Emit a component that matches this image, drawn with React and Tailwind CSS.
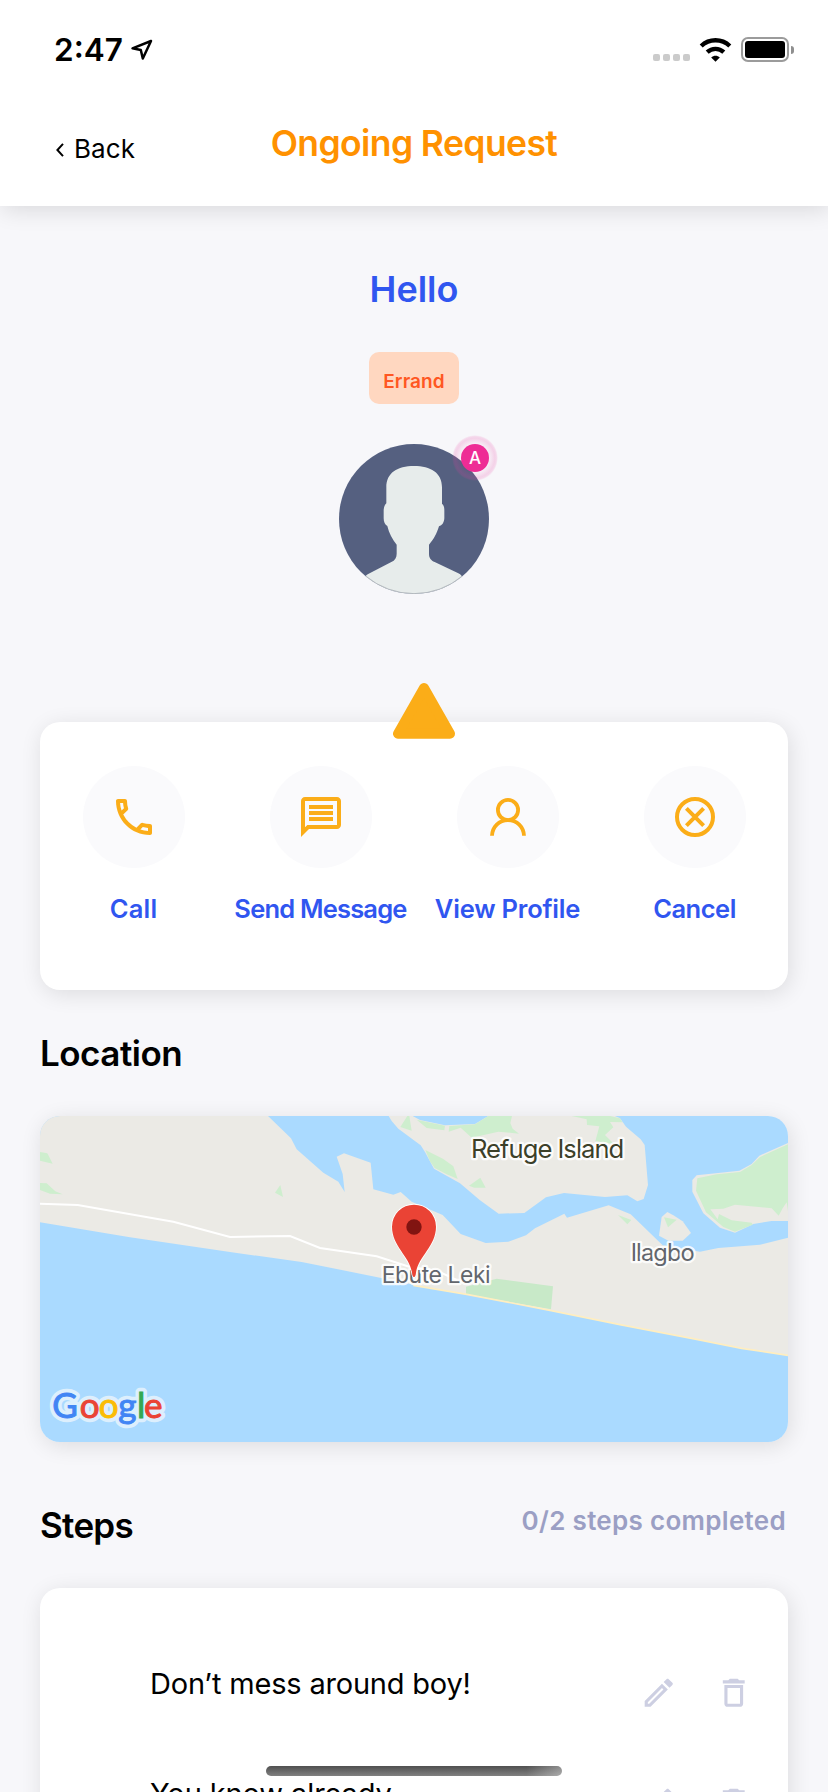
import {
  MdOutlineDelete,
  MdOutlineEdit,
  MdOutlineLocalPhone,
  MdOutlineMessage,
} from "react-icons/md";

const CARD =
  "rounded-[20px] shadow-[2px_4px_22px_rgba(0,0,0,0.11)]";

const GOOGLE = [
  { char: "G", x: 67, fill: "#4285f4" },
  { char: "o", x: 149, fill: "#ea4335" },
  { char: "o", x: 206, fill: "#fbbc05" },
  { char: "g", x: 265, fill: "#4285f4" },
  { char: "l", x: 321, fill: "#34a853" },
  { char: "e", x: 342, fill: "#ea4335" },
];

function StatusBar() {
  return (
    <div className="flex h-[99px] items-center justify-between pr-[34px] pl-[54px]">
      <div className="flex items-center gap-[7px]">
        <span className="text-[31.5px] leading-10 font-semibold">2:47</span>
        <svg className="h-[22px] w-[23px]" viewBox="0 0 23 22" fill="none">
          <path
            d="M21 2 L2.5 9.3 L10.8 11 L12.8 19.5 Z"
            stroke="#000"
            strokeWidth="2.5"
            strokeLinejoin="round"
          />
        </svg>
      </div>
      <div className="flex items-center">
        <div className="mt-4 flex gap-[3px]">
          <span className="size-[7px] rounded-[2px] bg-[#cbcbcb]" />
          <span className="size-[7px] rounded-[2px] bg-[#cbcbcb]" />
          <span className="size-[7px] rounded-[2px] bg-[#cbcbcb]" />
          <span className="size-[7px] rounded-[2px] bg-[#cbcbcb]" />
        </div>
        <svg className="ml-[9px] h-6 w-[33px]" viewBox="0 0 33 24" fill="none">
          <path d="M2.2 8 C10.3 0.4 22.7 0.4 30.8 8" stroke="#000" strokeWidth="4.4" />
          <path d="M8.2 14.2 C13 9.8 20 9.8 24.8 14.2" stroke="#000" strokeWidth="4.4" />
          <path d="M16.5 23.8 L12.2 19.6 C14.7 17.2 18.3 17.2 20.8 19.6 Z" fill="#000" />
        </svg>
        <div className="ml-[9px] flex h-[25px] w-12 rounded-[7px] border-2 border-[#9b9b9b] p-[2px]">
          <div className="flex-1 rounded-[3px] bg-black" />
        </div>
        <div className="ml-[2px] h-2 w-[3px] rounded-r-full bg-[#8f8f8f]" />
      </div>
    </div>
  );
}

function Header() {
  return (
    <header className="relative z-10 h-[206px] shrink-0 bg-white shadow-[2px_4px_22px_rgba(0,0,0,0.12)]">
      <StatusBar />
      <div className="grid grid-cols-[1fr_auto_1fr] items-start">
        <button className="mt-[29px] flex h-10 items-center pl-14">
          <svg className="mt-1 h-[14px] w-2" viewBox="0 0 8 14" fill="none">
            <path d="M7 0.8 L1.4 7 L7 13.2" stroke="#000" strokeWidth="2" />
          </svg>
          <span className="ml-[10px] text-[26px] tracking-[0.1px]">Back</span>
        </button>
        <h1 className="mt-[25px] text-[35.5px] leading-10 font-[560] tracking-[-0.6px] text-[#ff9100]">
          Ongoing Request
        </h1>
      </div>
    </header>
  );
}

function Avatar() {
  return (
    <div className="relative mt-10 size-[150px]">
      <svg className="size-full" viewBox="117 582 450 450">
        <defs>
          <clipPath id="avatar">
            <circle cx="342" cy="807" r="225" />
          </clipPath>
        </defs>
        <g clipPath="url(#avatar)">
          <rect x="117" y="582" width="450" height="450" fill="#556080" />
          <path
            d="M259 760 V712 C259 668 292 648 342 648 C392 648 426 668 426 712 V761 C432 766 433 772 433 782 V805 C432 819 426 826 417 829 C410 852 401 868 387 884 V911 C387 924 393 931 404 936 L475 970 Q487 976 487 984 V1040 H197 V978 Q200 974 206 971 L274 936 C285 931 290 923 290 911 V884 C277 868 267 850 262 828 C255 824 251 816 251 805 V780 C252 770 254 765 259 760 Z"
            fill="#e7eceb"
          />
          <path d="M197 978 A225 225 0 0 0 487 978" fill="none" stroke="#9aa0a6" strokeWidth="2" />
        </g>
      </svg>
      <span className="absolute top-[-9px] left-[113px] flex size-[46px] items-center justify-center rounded-full bg-[radial-gradient(closest-side,rgba(232,60,160,0.03)_60%,rgba(232,60,160,0.2)_86%,rgba(232,60,160,0.16)_93%,rgba(232,60,160,0)_100%)]">
        <span className="flex size-7 items-center justify-center rounded-full bg-[#ee2c95] pt-px text-[17px] font-medium text-white">
          A
        </span>
      </span>
    </div>
  );
}

function ProfileIcon() {
  return (
    <svg className="size-12" viewBox="0 0 48 48" fill="none" stroke="#fbad18" strokeWidth="3.8">
      <circle cx="24" cy="17" r="10.1" />
      <path d="M8 42.8 C8.3 34 15 27.2 24 27.2 C33 27.2 39.7 34 40 42.8" strokeLinejoin="round" />
    </svg>
  );
}

function CancelIcon() {
  return (
    <svg className="size-12" viewBox="0 0 48 48" fill="none" stroke="#fbad18">
      <circle cx="24" cy="24" r="18" strokeWidth="4" />
      <path d="M15.4 15.4 L32.6 32.6 M32.6 15.4 L15.4 32.6" strokeWidth="4" />
    </svg>
  );
}

function Action({ icon, children, className }) {
  return (
    <button className="flex flex-col items-center">
      <span className="flex size-[102px] items-center justify-center rounded-full bg-[#fafafc] text-[48px] text-[#fbad18]">
        {icon}
      </span>
      <span
        className={`mt-[25px] text-[25.5px] leading-8 font-[570] whitespace-nowrap text-[#3056f0] ${className}`}
      >
        {children}
      </span>
    </button>
  );
}

function Actions() {
  return (
    <section className={`relative mt-32 h-[268px] bg-white pt-11 ${CARD}`}>
      <svg className="absolute top-[-40px] left-[352px] h-[58px] w-16" viewBox="0 0 64 58">
        <path
          d="M32 6 L6 51.7 L58 51.7 Z"
          fill="#fbad18"
          stroke="#fbad18"
          strokeWidth="10"
          strokeLinejoin="round"
        />
      </svg>
      <div className="grid grid-cols-4">
        <Action icon={<MdOutlineLocalPhone />} className="tracking-[0.2px]">Call</Action>
        <Action icon={<MdOutlineMessage />} className="tracking-[-0.8px]">Send Message</Action>
        <Action icon={<ProfileIcon />} className="tracking-[-0.2px]">View Profile</Action>
        <Action icon={<CancelIcon />} className="tracking-[-0.5px]">Cancel</Action>
      </div>
    </section>
  );
}

function LocationMap() {
  return (
    <div className={`mt-[43px] h-[326px] overflow-hidden ${CARD}`}>
      <svg className="size-full" viewBox="30 288 2244 978" preserveAspectRatio="none">
        <rect x="30" y="288" width="2244" height="978" fill="#aadaff" />
        <g fill="#ebeae5">
          <path d="M30 288 H714 L783 355 L800 388 L880 458 L925 485 L944 516 L938 462 L920 410 L942 400 L1022 428 L1030 508 L1090 524 L1112 516 L1145 545 L1210 573 L1238 585 L1292 642 L1367 669 L1435 665 L1488 646 L1515 625 L1603 581 L1611 593 L1736 556 L1802 583 L1898 676 L2010 695 L2065 684 L2190 674 L2274 653 V1006 L2135 985 L2000 958 L1770 914 L1560 871 L1310 823 L1170 798 L1050 773 L815 726 L600 696 L300 652 L30 607 Z" />
          <path d="M1076 288 L1085 303 L1105 326 L1172 376 L1185 396 L1212 446 L1290 490 L1350 541 L1406 581 L1483 579 L1548 532 L1602 519 L1725 531 L1792 526 L1822 544 L1841 537 L1854 495 L1844 375 L1832 358 L1788 320 L1770 295 L1755 288 H1375 L1335 312 L1245 316 L1170 300 L1148 288 Z" />
          <path d="M2274 369 L2188 407 L2165 432 L2128 452 L2000 466 L1987 480 V515 L2020 580 L2070 623 L2115 638 L2170 612 L2225 603 H2274 Z" />
          <path d="M1912 576 L1895 591 L1887 647 L1915 662 H1958 L1983 639 L1958 604 L1930 586 Z" />
        </g>
        <g fill="#ceeece">
          <path d="M30 396 L52 400 L68 431 L30 422 Z" />
          <path d="M30 489 L50 490 L76 514 L98 523 L60 521 L30 510 Z" />
          <path d="M751 495 L735 518 L759 531 Z" />
          <path d="M1132 288 L1111 321 L1145 332 L1138 288 Z" />
          <path d="M1160 299 L1245 317 L1243 331 L1190 324 Z" />
          <path d="M1375 288 H1446 L1441 309 L1448 326 L1467 341 L1405 335 L1325 353 L1292 323 L1256 335 L1258 318 L1335 313 Z" />
          <path d="M1186 390 L1240 417 L1270 439 L1283 477 L1250 463 L1214 444 L1200 424 Z" />
          <path d="M1351 473 L1317 497 L1333 503 H1367 Z" />
          <path d="M1625 288 H1740 L1770 295 L1777 307 L1740 306 L1750 322 L1725 345 L1752 372 L1696 364 L1708 319 L1671 315 L1670 298 Z" />
          <path d="M1764 585 L1792 613 L1804 600 Z" />
          <path d="M1902 592 L1914 622 L1940 599 Z" />
          <path d="M2274 373 L2190 411 L2165 435 L2130 456 L2060 463 L2002 475 L1998 512 L2028 577 L2080 621 L2115 635 L2168 614 L2165 608 L2105 601 L2067 582 L2063 598 L2041 568 L2080 566 L2115 554 L2225 565 L2246 587 L2258 565 L2270 547 L2274 573 Z" />
        </g>
        <path d="M1308 800 L1400 776 L1569 799 L1563 868 L1308 823 Z" fill="#c8e9c8" />
        <path
          d="M1150 796 L1310 823 L1560 871 L1770 914 L2000 958 L2135 985 L2274 1006"
          fill="none"
          stroke="#ffeec0"
          strokeWidth="5"
        />
        <path
          d="M30 551 L143 555 L430 605 L600 651 L780 648 L870 684 L1040 709 L1140 741 L1220 752 L1280 780"
          fill="none"
          stroke="#fff"
          strokeWidth="6"
        />
        <g stroke="#fff" strokeOpacity="0.85" strokeWidth="14" strokeLinejoin="round" paintOrder="stroke">
          <text x="1323" y="414" fontSize="77" fill="#3c4029" textLength="460">Refuge Island</text>
          <text x="1802" y="724" fontSize="71" fill="#62666d" textLength="192">Ilagbo</text>
          <text x="1055" y="789" fontSize="69" fill="#62666d" textLength="327">Ebute Leki</text>
        </g>
        <path
          d="M1152 771 C1148 771 1147 765 1146 758 C1139 708 1086 679 1086 620 A66 66 0 0 1 1218 620 C1218 679 1165 708 1158 758 C1157 765 1156 771 1152 771 Z"
          fill="#ea4335"
          stroke="#fff"
          strokeWidth="5"
          paintOrder="stroke"
        />
        <circle cx="1152" cy="621" r="23" fill="#811411" />
        <g
          className="font-['Lato',sans-serif]"
          fontSize="105"
          fill="#ddeffd"
          stroke="#ddeffd"
          strokeWidth="25"
          strokeLinejoin="round"
          aria-hidden="true"
        >
          {GOOGLE.map(({ char, x }) => (
            <text key={x} x={x} y="1194">{char}</text>
          ))}
        </g>
        <g className="font-['Lato',sans-serif]" fontSize="105" strokeWidth="3">
          {GOOGLE.map(({ char, x, fill }) => (
            <text key={x} x={x} y="1194" fill={fill} stroke={fill}>{char}</text>
          ))}
        </g>
      </svg>
    </div>
  );
}

function Step({ children, className }) {
  return (
    <li className="flex h-[110px] items-start justify-between">
      <span className={`mt-px text-[29px] leading-10 ${className}`}>{children}</span>
      <span className="mt-[11px] flex gap-[37px] text-[37.5px] text-[#cdcfe2]">
        <MdOutlineEdit />
        <MdOutlineDelete />
      </span>
    </li>
  );
}

export default function App() {
  return (
    <div className="relative flex h-[1792px] w-[828px] flex-col overflow-hidden bg-[#f7f7fa] font-['Inter',sans-serif] text-black">
      <Header />
      <main className="flex flex-col px-10">
        <div className="mt-[63px] flex flex-col items-center">
          <h2 className="text-[36px] leading-10 font-[560] text-[#3056f0]">Hello</h2>
          <span className="mt-[43px] flex h-[52px] w-[90px] items-center justify-center rounded-[10px] bg-[#ffd7c0] pt-[8px] text-[19px] font-[570] tracking-[0.1px] text-[#ff5722]">
            Errand
          </span>
          <Avatar />
        </div>
        <Actions />
        <h2 className="mt-[43px] text-[35px] leading-10 font-[590] tracking-[-0.5px]">Location</h2>
        <LocationMap />
        <div className="mt-[63px] flex items-start justify-between pr-[2px]">
          <h2 className="text-[35px] leading-10 font-[590] tracking-[-0.7px]">Steps</h2>
          <span className="mt-[-4px] text-[26px] leading-10 font-[570] tracking-[0.3px] text-[#9b9fc4]">
            0/2 steps completed
          </span>
        </div>
        <ul className={`mt-[43px] h-[300px] shrink-0 bg-white pt-[75px] pr-9 pl-[110px] ${CARD}`}>
          <Step className="tracking-[-0.2px]">Don’t mess around boy!</Step>
          <Step className="tracking-[-0.1px]">You know already</Step>
        </ul>
      </main>
      <div className="absolute bottom-4 left-[266px] h-[10px] w-[296px] rounded-full bg-[linear-gradient(90deg,transparent_88%,rgba(255,255,255,0.35)),linear-gradient(#505050,#808080)]" />
    </div>
  );
}
